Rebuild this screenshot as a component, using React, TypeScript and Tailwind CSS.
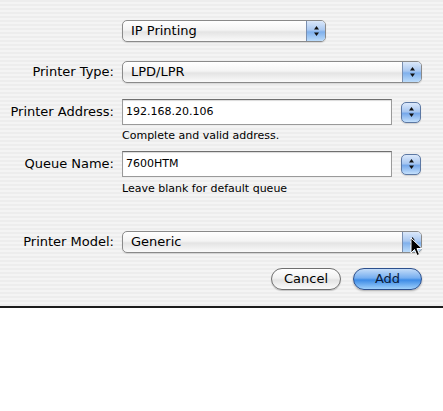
import type { ReactNode } from "react";

const font = { fontFamily: '"Lucida Grande", "DejaVu Sans", sans-serif' };

const Arrows = () => (
  <svg width="7" height="12" viewBox="0 0 7 12">
    <path d="M3.5 1 L6 4.5 L1 4.5 Z" fill="#111" />
    <path d="M3.5 11 L6 7.5 L1 7.5 Z" fill="#111" />
  </svg>
);

const Popup = ({ value, width }: { value: string; width: string }) => (
  <div
    className={`relative flex h-[22px] ${width} items-center overflow-hidden rounded-[5px] border border-[#8a8a8a] bg-[linear-gradient(#ffffff,#f4f4f4_45%,#e4e4e4_55%,#fafafa)] shadow-[0_1px_1px_rgba(0,0,0,0.12)]`}
  >
    <span className="flex-1 pl-[8px] text-[13px] text-black">{value}</span>
    <div className="flex h-full w-[19px] items-center justify-center border-l border-[#7a8fb0] bg-[linear-gradient(#dbe8fa,#a9c8f1_45%,#7fb0ec_55%,#bcdcfb)]">
      <Arrows />
    </div>
  </div>
);

const Stepper = () => (
  <div className="flex h-[21px] w-[20px] items-center justify-center rounded-[5px] border border-[#5c78a3] bg-[linear-gradient(#dce9fb,#a7c6f0_45%,#76a8ea_55%,#c4e0fc)] shadow-[0_1px_1px_rgba(0,0,0,0.15)]">
    <Arrows />
  </div>
);

const Label = ({ children }: { children: ReactNode }) => (
  <div className="text-right text-[13px] text-black">{children}</div>
);

const Field = ({ value }: { value: string }) => (
  <div className="flex h-[26px] w-[270px] items-center border border-[#9a9a9a] border-t-[#6f6f6f] bg-white pl-[3px] text-[11px] text-black shadow-[inset_0_1px_1px_rgba(0,0,0,0.15)]">
    {value}
  </div>
);

const Hint = ({ children }: { children: ReactNode }) => (
  <div className="ml-[122px] text-[11px] leading-[14px] text-black">{children}</div>
);

export default function App() {
  return (
    <div className="h-[411px] w-[443px] bg-white" style={font}>
      <div className="relative h-[308px] border-b-2 border-[#1c1c1c] bg-[image:repeating-linear-gradient(to_bottom,#ededed_0px,#ededed_2px,#f4f4f4_2px,#f4f4f4_4px)] pt-[20px]">
        <div className="ml-[122px]">
          <Popup value="IP Printing" width="w-[204px]" />
        </div>

        <div className="mt-[19px] grid grid-cols-[114px_300px] items-center gap-x-[8px]">
          <Label>Printer Type:</Label>
          <Popup value="LPD/LPR" width="w-[300px]" />
        </div>

        <div className="mt-[16px] grid grid-cols-[114px_270px_20px] items-center gap-x-[8px]">
          <Label>Printer Address:</Label>
          <Field value="192.168.20.106" />
          <div className="ml-[1px]">
            <Stepper />
          </div>
        </div>
        <div className="mt-[4px]">
          <Hint>Complete and valid address.</Hint>
        </div>

        <div className="mt-[8px] grid grid-cols-[114px_270px_20px] items-center gap-x-[8px]">
          <Label>Queue Name:</Label>
          <Field value="7600HTM" />
          <div className="ml-[1px]">
            <Stepper />
          </div>
        </div>
        <div className="mt-[5px]">
          <Hint>Leave blank for default queue</Hint>
        </div>

        <div className="mt-[35px] grid grid-cols-[114px_300px] items-center gap-x-[8px]">
          <Label>Printer Model:</Label>
          <Popup value="Generic" width="w-[300px]" />
        </div>

        <div className="mt-[15px] flex justify-end gap-[12px] pr-[21px]">
          <button className="h-[22px] w-[70px] rounded-full border border-[#6f6f6f] bg-[linear-gradient(#ffffff,#f1f1f1_45%,#e2e2e2_55%,#fbfbfb)] text-[13px] text-black shadow-[0_1px_1px_rgba(0,0,0,0.2)]">
            Cancel
          </button>
          <button className="h-[22px] w-[69px] rounded-full border border-[#2c4f8c] bg-[linear-gradient(#c3dcf8,#76aef0_45%,#3d8be6_55%,#9fd0fb)] text-[13px] text-[#0a1a3a] shadow-[0_1px_2px_rgba(0,0,0,0.3)]">
            Add
          </button>
        </div>

        <svg
          className="absolute left-[410px] top-[237px]"
          width="14"
          height="22"
          viewBox="0 0 14 22"
        >
          <path
            d="M1 1 L1 16 L4.5 12.5 L7 18.5 L9.5 17.5 L7 11.5 L12 11.5 Z"
            fill="#000"
            stroke="#fff"
            strokeWidth="1"
          />
        </svg>
      </div>
    </div>
  );
}
